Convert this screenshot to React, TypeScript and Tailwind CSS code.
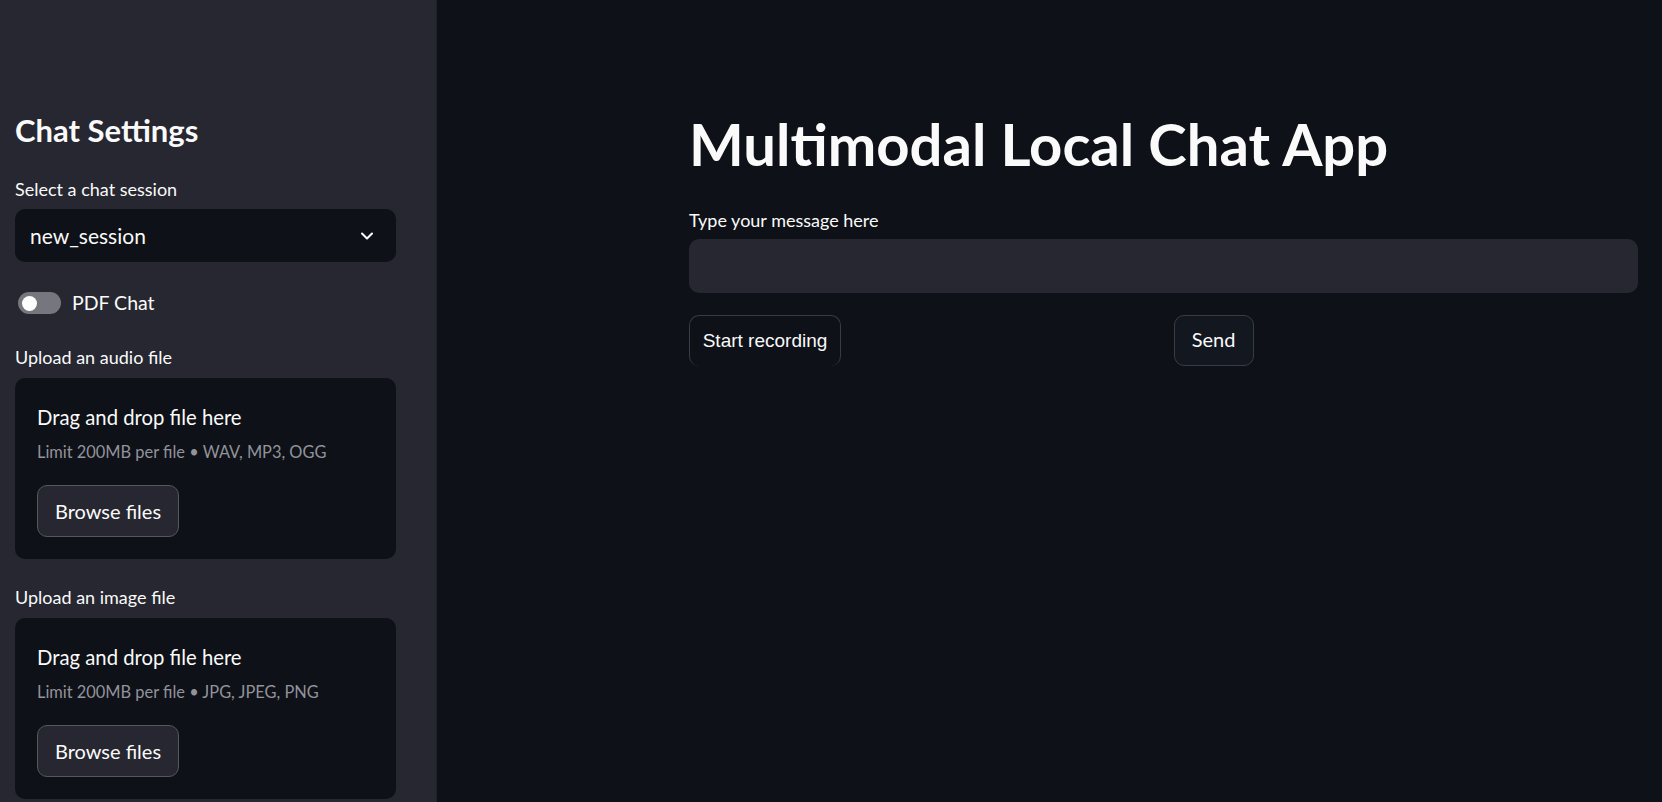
import { ChevronDown } from "lucide-react";

function Dropzone({ types }: { types: string }) {
  return (
    <div className="mt-[11px] h-[181px] w-[381px] rounded-[10px] bg-[#0e1117] px-[22px] pt-[25px]">
      <div className="text-[20.3px] leading-[28px] text-[#fafafa]">Drag and drop file here</div>
      <div className="mt-[10px] text-[16.4px] leading-[22px] text-[#92939b]">
        Limit 200MB per file • {types}
      </div>
      <button className="mt-[22px] flex h-[52px] w-[142px] items-center justify-center rounded-[10px] border border-[#55565f] bg-[#262730] text-[20px] text-[#fafafa]">
        Browse files
      </button>
    </div>
  );
}

export default function App() {
  return (
    <div
      className="flex h-[802px] w-full overflow-hidden bg-[#0e1117] text-[#fafafa]"
      style={{ fontFamily: "Lato, 'Noto Sans', sans-serif" }}
    >
      <aside className="flex w-[437px] shrink-0 flex-col border-r border-[#1f2028] bg-[#262730] pl-[15px] pt-[113px]">
        <h2 className="h-[35px] text-[31px] font-bold leading-[35px]">Chat Settings</h2>

        <label className="mt-[31px] h-[20px] text-[18px] leading-[20px]">Select a chat session</label>
        <div className="mt-[10px] flex h-[53px] w-[381px] items-center justify-between rounded-[10px] bg-[#0e1117] pl-[15px] pr-[19px]">
          <span className="text-[21px]">new_session</span>
          <ChevronDown size={20} strokeWidth={2.5} />
        </div>

        <div className="mt-[30px] flex h-[22px] items-center gap-[11px]">
          <div className="ml-[3px] flex h-[22px] w-[43px] items-center rounded-full bg-[#75767e] pl-[4px]">
            <div className="h-[15px] w-[15px] rounded-full bg-white" />
          </div>
          <span className="text-[19.5px]">PDF Chat</span>
        </div>

        <label className="mt-[33px] h-[20px] text-[18px] leading-[20px]">Upload an audio file</label>
        <Dropzone types="WAV, MP3, OGG" />

        <label className="mt-[28px] h-[20px] text-[18px] leading-[20px]">Upload an image file</label>
        <Dropzone types="JPG, JPEG, PNG" />
      </aside>

      <main className="flex-1 pl-[252px] pr-[24px] pt-[108px]">
        <h1 className="h-[72px] text-[58px] font-bold leading-[72px]">
          Multimodal Local Chat App
        </h1>
        <label className="mt-[30px] block h-[20px] text-[18px] leading-[20px]">Type your message here</label>
        <div className="mt-[9px] h-[54px] w-[949px] rounded-[10px] bg-[#262730]" />
        <div className="mt-[22px] grid w-[949px] grid-cols-2 gap-[20px]">
          <div>
            <button
              className="flex h-[51px] w-[152px] items-center justify-center rounded-[10px] border border-b-0 border-[#3a3c44] bg-[#0e1117] text-[19px]"
              style={{ fontFamily: "'Liberation Sans', Arial, sans-serif" }}
            >
              Start recording
            </button>
          </div>
          <div>
            <button className="flex h-[51px] w-[80px] items-center justify-center rounded-[10px] border border-[#3a3c44] bg-[#131720] pb-[3px] text-[20px]">
              Send
            </button>
          </div>
        </div>
      </main>
    </div>
  );
}
